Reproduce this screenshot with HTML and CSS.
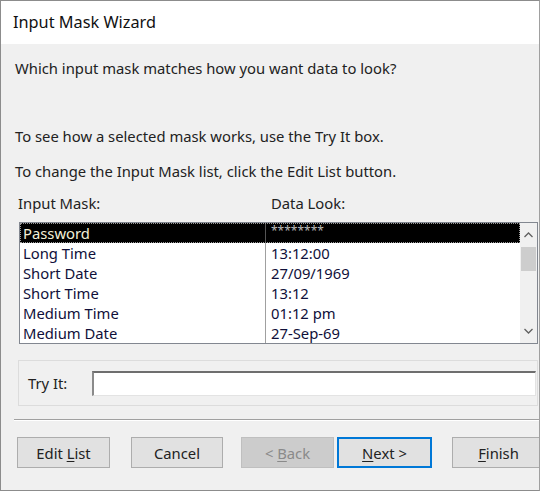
FILE: index.html
```html
<!DOCTYPE html>
<html>
<head>
<meta charset="utf-8">
<link rel="stylesheet" href="styles.css">
</head>
<body>
<div class="window">
  <div class="titlebar">Input Mask Wizard</div>
  <div class="content">
    <p class="question">Which input mask matches how you want data to look?</p>
    <p class="hint hint-first">To see how a selected mask works, use the Try It box.</p>
    <p class="hint hint-second">To change the Input Mask list, click the Edit List button.</p>
    <div class="headers">
      <span class="col1">Input Mask:</span>
      <span class="col2">Data Look:</span>
    </div>
    <div class="listbox">
      <div class="rows">
        <div class="row selected"><span class="c1">Password</span><span class="c2">********</span></div>
        <div class="row"><span class="c1">Long Time</span><span class="c2">13:12:00</span></div>
        <div class="row"><span class="c1">Short Date</span><span class="c2">27/09/1969</span></div>
        <div class="row"><span class="c1">Short Time</span><span class="c2">13:12</span></div>
        <div class="row"><span class="c1">Medium Time</span><span class="c2">01:12 pm</span></div>
        <div class="row"><span class="c1">Medium Date</span><span class="c2">27-Sep-69</span></div>
      </div>
      <div class="scrollbar">
        <div class="arrow"><svg width="9" height="6" viewBox="0 0 9 6"><path d="M0.5 5 L4.5 1 L8.5 5" fill="none" stroke="#606060" stroke-width="1.3"/></svg></div>
        <div class="track"><div class="thumb"></div></div>
        <div class="arrow"><svg width="9" height="6" viewBox="0 0 9 6"><path d="M0.5 1 L4.5 5 L8.5 1" fill="none" stroke="#606060" stroke-width="1.3"/></svg></div>
      </div>
    </div>
    <div class="tryit">
      <span class="tryit-label">Try It:</span>
      <div class="tryit-input"></div>
    </div>
  </div>
  <div class="separator"></div>
  <div class="buttons">
    <div class="btn btn-edit"><span>Edit <u>L</u>ist</span></div>
    <div class="btn btn-cancel"><span>Cancel</span></div>
    <div class="btn btn-back disabled"><span>&lt; <u>B</u>ack</span></div>
    <div class="btn btn-next default"><span><u>N</u>ext &gt;</span></div>
    <div class="btn btn-finish"><span><u>F</u>inish</span></div>
  </div>
</div>
</body>
</html>
```

FILE: styles.css
```css
* { box-sizing: border-box; }
html, body { margin: 0; padding: 0; }
body {
  background: #f0f0f0;
  font-family: "Segoe UI", "Noto Sans", "Open Sans", sans-serif;
  font-size: 14.8px;
  color: #000;
  overflow: hidden;
}
.window {
  width: 540px;
  height: 491px;
  border: 1px solid #8c8c8c;
  border-right-color: #a0a0a0;
  background: #f0f0f0;
  overflow: hidden;
}
.titlebar {
  height: 43px;
  background: #fff;
  line-height: 43px;
  padding-left: 12px;
  font-size: 16.3px;
  color: #111;
}
.content {
  padding-left: 14px;
}
p { margin: 0; line-height: 20px; }
.question { margin-top: 14px; color: #222; }
.hint-first { margin-top: 48px; color: #222; }
.hint-second { margin-top: 15px; color: #222; }
.headers {
  display: flex;
  margin-top: 12px;
  line-height: 20px;
  color: #222;
}
.headers .col1 { width: 256px; padding-left: 3px; }
.listbox {
  margin-top: 9px;
  margin-left: 4px;
  width: 519px;
  height: 122px;
  border: 1px solid #828790;
  background: #fff;
  display: flex;
}
.rows { flex: 1; }
.row {
  display: flex;
  height: 20px;
  line-height: 20px;
}
.row .c1 {
  width: 246px;
  padding-left: 3px;
  border-right: 1px solid #a0a0a0;
  color: #10103a;
}
.row .c2 { padding-left: 5px; color: #10103a; }
.row.selected {
  background: #000;
  outline: 1px dotted #9a9a9a;
  outline-offset: -1px;
}
.row.selected .c1 { color: #f4f0d8; border-right-color: #555; }
.row.selected .c2 { color: #bbb; font-size: 12px; line-height: 16px; }
.scrollbar {
  width: 17px;
  background: #f0f0f0;
  display: flex;
  flex-direction: column;
}
.arrow {
  height: 24px;
  display: flex;
  align-items: center;
  justify-content: center;
}
.track { flex: 1; }
.thumb {
  margin: 0 1px;
  height: 24px;
  background: #cdcdcd;
}
.tryit {
  margin-top: 16px;
  margin-left: 3px;
  width: 520px;
  height: 46px;
  border: 1px solid #dcdcdc;
  display: flex;
  align-items: center;
}
.tryit-label { padding-left: 9px; width: 73px; color: #222; }
.tryit-input {
  width: 444px;
  height: 25px;
  background: #fff;
  border-top: 2px solid #6e6e6e;
  border-left: 2px solid #8a8a8a;
  border-right: 1px solid #e3e3e3;
  border-bottom: 1px solid #e3e3e3;
}
.separator {
  margin-top: 13px;
  margin-left: 13px;
  height: 2px;
  border-top: 1px solid #a0a0a0;
  border-bottom: 1px solid #ffffff;
}
.buttons {
  display: flex;
  margin-top: 16px;
}
.btn {
  width: 93px;
  height: 31px;
  border: 1px solid #adadad;
  background: #e1e1e1;
  display: flex;
  align-items: center;
  justify-content: center;
  color: #222;
  flex-shrink: 0;
}
.btn u { text-underline-offset: 2px; }
.btn-edit { margin-left: 16px; }
.btn-cancel { margin-left: 21px; width: 92px; }
.btn-back { margin-left: 18px; }
.btn-next { margin-left: 3px; width: 95px; }
.btn-finish { margin-left: 20px; }
.disabled { background: #cccccc; border-color: #bfbfbf; color: #8a8a8a; }
.default { border: 2px solid #0078d7; }
```
